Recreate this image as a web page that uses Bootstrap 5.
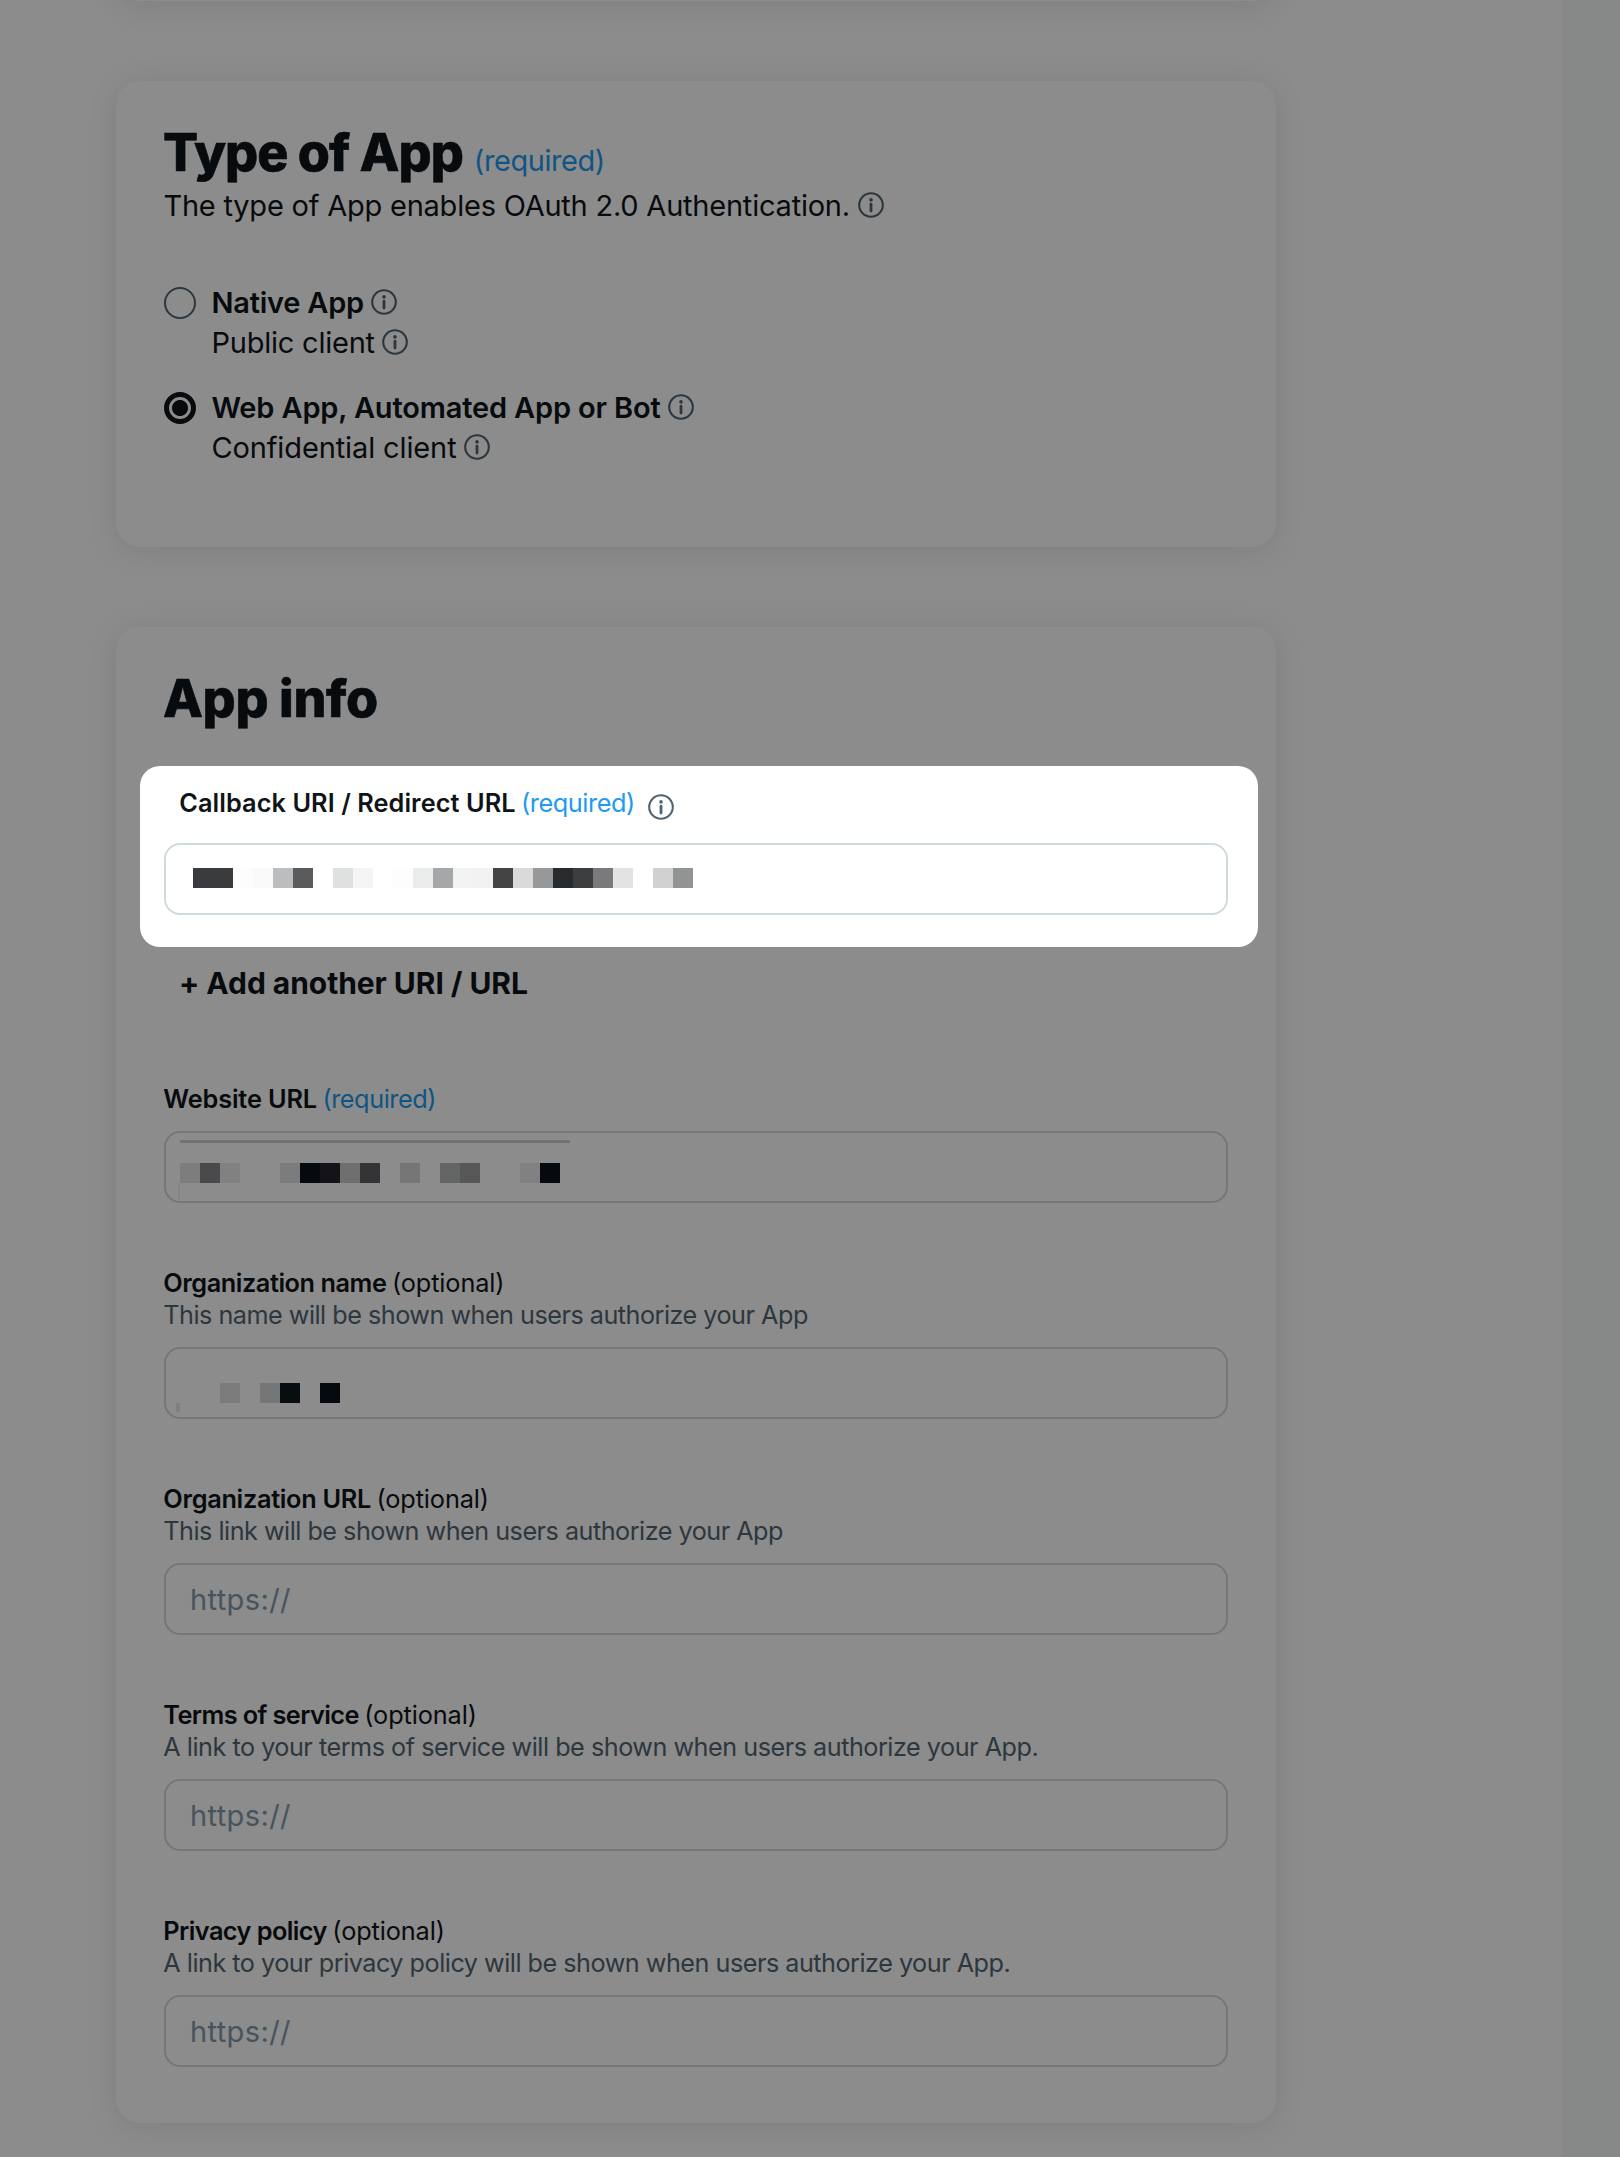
<!DOCTYPE html>
<html lang="en">
<head>
<meta charset="utf-8">
<meta name="viewport" content="width=device-width, initial-scale=1">
<title>User authentication settings</title>
<link href="https://cdn.jsdelivr.net/npm/bootstrap@5.3.0/dist/css/bootstrap.min.css" rel="stylesheet">
<style>
  body { height: 2157px; font-family: Inter, "Liberation Sans", sans-serif; color: #0f1419; background: #fff; }
  .page-main { width: 1562px; padding-left: 116px; }
  .page-rail { background: #f5faf7; }
  .panel { width: 1160px; border: 0; border-radius: 24px; padding: 40px 48px 0; box-shadow: 0 4px 30px rgba(0,0,0,.1); background: #fff; }
  .panel-prev { height: 1px; padding: 0; border-radius: 0; box-shadow: none; }
  .panel-prev::before { content: ""; position: absolute; bottom: 0; left: 0; right: 0; height: 100px; border-radius: 24px; background: #fff; box-shadow: 0 4px 30px rgba(0,0,0,.1); }
  .panel-type { height: 466px; margin-top: 80px; }
  .panel-info { height: 1496px; margin-top: 80px; }
  .panel-title { font-size: 52px; line-height: 64px; font-weight: 850; letter-spacing: -1.02px; margin: 0 0 0 -1px; -webkit-text-stroke: .6px #0f1419; }
  .info-title { letter-spacing: -.4px; margin-bottom: 35px; }
  .need { color: #1d9bf0; letter-spacing: -.45px; }
  .need-lg { font-size: 29px; letter-spacing: -.45px; margin-left: 3px; }
  .line-lg { font-size: 29px; line-height: 40px; height: 40px; letter-spacing: -.22px; gap: 7px; white-space: nowrap; }
  .line-lg span { margin-left: -.6px; }
  .info-ico { width: 26px; height: 26px; color: #536471; flex: none; margin-top: -3px; }
  .type-sub { margin: 1px 0 57px; gap: 8px; }
  .choice { gap: 16px; margin-bottom: 25px; }
  .choice .form-check-input { width: 32px; height: 32px; margin: 4px 0 0; border: 2px solid #536471; background: none; flex: none; }
  .choice .form-check-input:checked { border: 5px solid #0f1419; background: radial-gradient(circle, #0f1419 7.6px, transparent 8.4px); background-origin: border-box; background-clip: border-box; }
  .spotlight { position: relative; z-index: 5; margin: 0 -30px 0 -24px; padding: 21px 30px 32px 24px; height: 181px; background: #fff; border-radius: 20px; box-shadow: 0 0 0 2400px rgba(0,0,0,.45); }
  .label-line { font-size: 25.3px; line-height: 32px; height: 32px; gap: 5.5px; letter-spacing: -.12px; white-space: nowrap; }
  .label-line .fw-semibold { letter-spacing: var(--track, .07px); margin-left: -.7px; }
  .desc { font-size: 25.2px; line-height: 32px; letter-spacing: -.5px; color: #536471; white-space: nowrap; margin-left: -.7px; }
  .field { margin-bottom: 64px; }
  .field-box.form-control { height: 72px; border: 2px solid #cfd9de; border-radius: 16px; padding: 0 23px 0 24px; font-size: 29px; letter-spacing: .4px; margin-top: 16px; position: relative; background: #fff; }
  .field-box.form-control::placeholder { color: #829aab; opacity: 1; }
  .add-link { font-size: 30px; line-height: 40px; font-weight: 700; margin: 16px 0 80px 15px; letter-spacing: -.05px; }
  .redact { height: 20px; }
  .redact i { width: 20px; height: 20px; }
  .redact-line { position: absolute; left: 14px; top: 7px; width: 390px; height: 3px; background: #cad5d8; }
  .redact-edge { position: absolute; left: 12px; width: 2px; background: #f1f1f1; }
  #callback.field-box { padding: 0 0 0 27px; margin-top: 24px; }
  #callback .redact { margin-bottom: 2px; }
  #website.field-box { padding: 30px 0 0 14px; }
  #orgname.field-box { padding: 34px 0 0 14px; }
  #orgname .redact-edge { left: 10px; width: 4px; background: #eaeaea; }
</style>
</head>
<body class="d-flex overflow-hidden">
<svg width="0" height="0" class="position-absolute" aria-hidden="true">
  <symbol id="info" viewBox="0 0 26 26"><circle cx="13" cy="13" r="11.8" fill="none" stroke="currentColor" stroke-width="2.1"/><circle cx="13" cy="7.9" r="1.8" fill="currentColor"/><path d="M13 12.2V19" stroke="currentColor" stroke-width="2.8" stroke-linecap="round"/></symbol>
</svg>
<main class="page-main flex-shrink-0">
  <section class="card panel panel-prev"></section>

  <section class="card panel panel-type">
    <div class="d-flex align-items-baseline gap-2">
      <h2 class="panel-title">Type of App</h2><span class="need need-lg">(required)</span>
    </div>
    <div class="line-lg type-sub d-flex align-items-center"><span>The type of App enables OAuth 2.0 Authentication.</span><svg class="info-ico"><use href="#info"/></svg></div>
    <div class="choice d-flex">
      <input class="form-check-input" type="radio" name="apptype" aria-label="Native App">
      <div>
        <div class="line-lg d-flex align-items-center"><span class="fw-semibold">Native App</span><svg class="info-ico"><use href="#info"/></svg></div>
        <div class="line-lg d-flex align-items-center"><span>Public client</span><svg class="info-ico"><use href="#info"/></svg></div>
      </div>
    </div>
    <div class="choice d-flex">
      <input class="form-check-input" type="radio" name="apptype" aria-label="Web App" checked>
      <div>
        <div class="line-lg d-flex align-items-center"><span class="fw-semibold" style="letter-spacing:-.16px">Web App, Automated App or Bot</span><svg class="info-ico"><use href="#info"/></svg></div>
        <div class="line-lg d-flex align-items-center"><span style="letter-spacing:-.12px">Confidential client</span><svg class="info-ico"><use href="#info"/></svg></div>
      </div>
    </div>
  </section>

  <section class="card panel panel-info">
    <h2 class="panel-title info-title">App info</h2>

    <div class="spotlight">
      <div class="label-line d-flex align-items-center ps-3"><span class="fw-semibold">Callback URI / Redirect URL</span><span class="need">(required)</span><svg class="info-ico ms-2 mt-2"><use href="#info"/></svg></div>
      <div class="form-control field-box d-flex align-items-center" id="callback">
        <div class="redact d-flex" data-cells="3a3b3f 3a3b3c fdfdfd fafafa bcbdbf 5a5b5d - dfe1e0 f5f5f5 - fdfdfd ebedec a6a7a8 f2f3f3 f2f2f2 444445 dadada 97989a 282b2d 3d3e3f 7a7a7c e3e3e3 - d0d1d0 929493"></div>
      </div>
    </div>

    <div class="add-link">+ Add another URI / URL</div>

    <div class="field">
      <div class="label-line d-flex"><span class="fw-semibold" style="--track:-.15px">Website URL</span><span class="need">(required)</span></div>
      <div class="form-control field-box" id="website">
        <span class="redact-line"></span><span class="redact-edge" style="top:50px;height:17px"></span>
        <div class="redact d-flex" data-cells="e3e3e3 87888c ebebeb - - dee3e0 0b1218 24242c cacaca 5f6064 - d8d8d8 - b6b9b8 9e9e9e - - ebebeb 0b1218"></div>
      </div>
    </div>

    <div class="field">
      <div class="label-line d-flex"><span class="fw-semibold" style="--track:-.45px">Organization name</span><span>(optional)</span></div>
      <div class="desc">This name will be shown when users authorize your App</div>
      <div class="form-control field-box" id="orgname">
        <span class="redact-edge" style="top:54px;height:9px"></span>
        <div class="redact d-flex" data-cells="- - e0e0e0 - d5d7da 0f181d - 0b1218"></div>
      </div>
    </div>

    <div class="field">
      <div class="label-line d-flex"><span class="fw-semibold" style="--track:-.3px">Organization URL</span><span>(optional)</span></div>
      <div class="desc">This link will be shown when users authorize your App</div>
      <input class="form-control field-box" type="text" placeholder="https://">
    </div>

    <div class="field">
      <div class="label-line d-flex"><span class="fw-semibold" style="--track:-.6px">Terms of service</span><span>(optional)</span></div>
      <div class="desc" style="letter-spacing:-.48px">A link to your terms of service will be shown when users authorize your App.</div>
      <input class="form-control field-box" type="text" placeholder="https://">
    </div>

    <div class="field mb-0">
      <div class="label-line d-flex"><span class="fw-semibold" style="--track:-.57px">Privacy policy</span><span>(optional)</span></div>
      <div class="desc" style="letter-spacing:-.49px">A link to your privacy policy will be shown when users authorize your App.</div>
      <input class="form-control field-box" type="text" placeholder="https://">
    </div>
  </section>
</main>
<aside class="page-rail flex-grow-1"></aside>
<script src="https://cdn.jsdelivr.net/npm/bootstrap@5.3.0/dist/js/bootstrap.bundle.min.js"></script>
<script>
  // Fill each masked value with its row of 20px blocks; "-" leaves a gap.
  document.querySelectorAll('.redact').forEach(function (row) {
    row.dataset.cells.split(' ').forEach(function (c) {
      var cell = document.createElement('i');
      if (c !== '-') cell.style.background = '#' + c;
      row.appendChild(cell);
    });
  });
</script>
</body>
</html>
